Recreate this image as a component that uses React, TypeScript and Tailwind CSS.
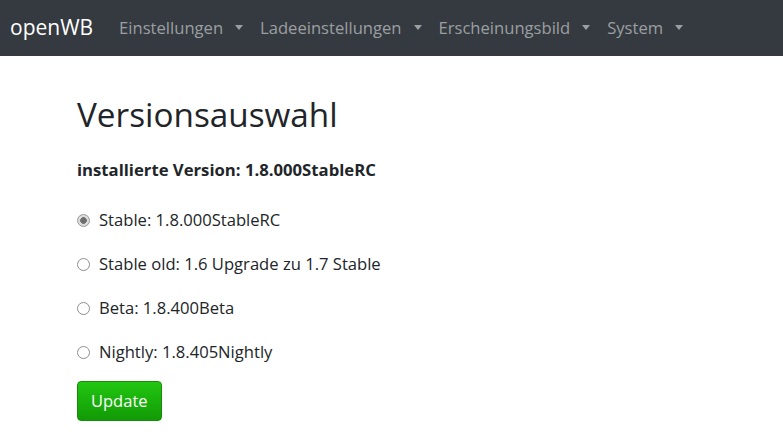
import { useState } from "react"

const versions = [
  { id: "stable", label: "Stable: 1.8.000StableRC" },
  { id: "stableold", label: "Stable old: 1.6 Upgrade zu 1.7 Stable" },
  { id: "beta", label: "Beta: 1.8.400Beta" },
  { id: "nightly", label: "Nightly: 1.8.405Nightly" },
]

const menu = ["Einstellungen", "Ladeeinstellungen", "Erscheinungsbild", "System"]

function Caret() {
  return <span className="ml-[12px] inline-block border-x-[4.5px] border-t-[5px] border-x-transparent border-t-current" />
}

export default function App() {
  const [selected, setSelected] = useState("stable")

  return (
    <div className="min-h-screen bg-white font-['Open_Sans',sans-serif] text-[#212529]">
      <nav className="flex h-[56px] items-center bg-[#343a40] px-[10px]">
        <span className="mr-[26px] text-[21px] text-white">openWB</span>
        <div className="flex items-center gap-[17px]">
          {menu.map((m) => (
            <span key={m} className="flex items-center text-[16.6px] text-[#9c9fa2]">
              {m}
              <Caret />
            </span>
          ))}
        </div>
      </nav>

      <div className="px-[77px] pt-[39px]">
        <h1 className="text-[33.3px] leading-[1.2] font-medium">Versionsauswahl</h1>
        <p className="mt-[22px] text-[16.7px] font-bold">installierte Version: 1.8.000StableRC</p>

        <div className="mt-[26px] flex flex-col gap-[20px]">
          {versions.map((v) => (
            <label key={v.id} className="flex items-center gap-[9px] text-[16.6px] leading-[24px]">
              <input
                type="radio"
                name="version"
                className="m-0 h-[13px] w-[13px] appearance-none rounded-full border border-[#8d8d8d] bg-white checked:border-[#9a9a9a] checked:bg-[radial-gradient(circle,#6e6e6e_0_3px,#dcdcdc_3.6px_100%)]"
                checked={selected === v.id}
                onChange={() => setSelected(v.id)}
              />
              {v.label}
            </label>
          ))}
        </div>

        <button className="mt-[17px] h-[40px] rounded-[4px] border border-[#1a8a0a] bg-gradient-to-b from-[#22c712] to-[#119a05] px-[13px] text-[16.5px] text-white">
          Update
        </button>
      </div>
    </div>
  )
}
